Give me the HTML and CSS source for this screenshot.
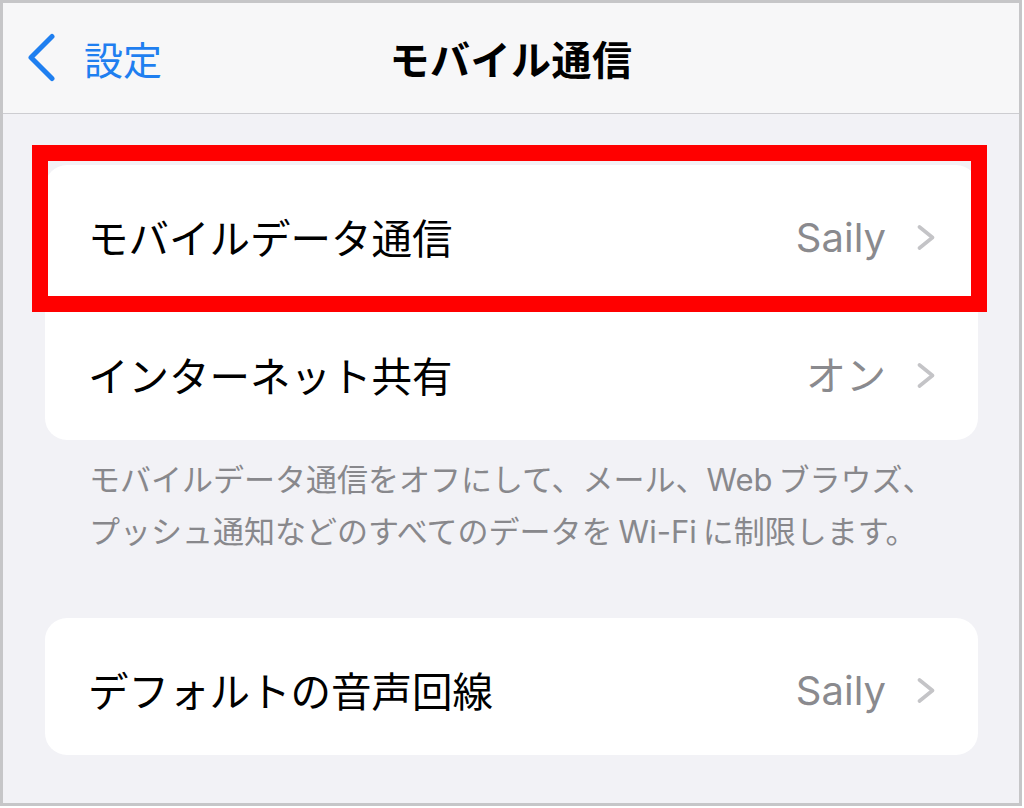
FILE: index.html
```html
<!DOCTYPE html>
<html lang="ja">
<head>
<meta charset="utf-8">
<title>モバイル通信</title>
<link rel="stylesheet" href="styles.css">
</head>
<body>
<div class="frame">
  <header class="nav">
    <div class="back">
      <svg class="back-icon" width="29" height="49" viewBox="0 0 29 49"><polyline points="25,3.5 4,24.5 25,45.5" fill="none" stroke="currentColor" stroke-width="5" stroke-linecap="round" stroke-linejoin="round"/></svg>
      <span class="back-text">設定</span>
    </div>
    <h1 class="title">モバイル通信</h1>
    <div class="spacer"></div>
  </header>
  <main class="content">
    <section class="group">
      <div class="row">
        <span class="label">モバイルデータ通信</span>
        <span class="value">Saily</span>
        <svg class="chev" width="18" height="25" viewBox="0 0 18 25"><polyline points="2.5,2 15.5,12.5 2.5,23" fill="none" stroke="currentColor" stroke-width="3.6" stroke-linecap="round" stroke-linejoin="round"/></svg>
      </div>
      <div class="divider"></div>
      <div class="row">
        <span class="label">インターネット共有</span>
        <span class="value">オン</span>
        <svg class="chev" width="18" height="25" viewBox="0 0 18 25"><polyline points="2.5,2 15.5,12.5 2.5,23" fill="none" stroke="currentColor" stroke-width="3.6" stroke-linecap="round" stroke-linejoin="round"/></svg>
      </div>
    </section>
    <p class="footer">モバイルデータ通信をオフにして、メール、Web<span class="gap"></span>ブラウズ、<br>プッシュ通知などのすべてのデータを<span class="gap"></span>Wi-Fi<span class="gap"></span>に制限します。</p>
    <section class="group group-2">
      <div class="row">
        <span class="label">デフォルトの音声回線</span>
        <span class="value">Saily</span>
        <svg class="chev" width="18" height="25" viewBox="0 0 18 25"><polyline points="2.5,2 15.5,12.5 2.5,23" fill="none" stroke="currentColor" stroke-width="3.6" stroke-linecap="round" stroke-linejoin="round"/></svg>
      </div>
    </section>
  </main>
  <div class="highlight"></div>
</div>
</body>
</html>
```
FILE: styles.css
```css
* { box-sizing: border-box; }
html, body { margin: 0; padding: 0; background: #ffffff; }
body {
  font-family: Inter, "Noto Sans CJK JP", sans-serif;
  color: #000;
}
.frame {
  position: relative;
  width: 1022px;
  height: 806px;
  border: 3px solid #c6c6c8;
  background: #f2f2f6;
  overflow: hidden;
}
.nav {
  height: 111px;
  background: #f7f7f8;
  border-bottom: 1px solid #cdcdd1;
  display: grid;
  grid-template-columns: 1fr auto 1fr;
  align-items: center;
}
.back {
  display: flex;
  align-items: center;
  padding-left: 24px;
  color: #1f7ff0;
}
.back-icon { display: block; margin-top: -2px; }
.back-text {
  margin-left: 28px;
  font-family: "Noto Sans CJK JP", sans-serif;
  font-size: 39px;
  line-height: 1;
}
.title {
  margin: 0;
  font-family: "Noto Sans CJK JP", sans-serif;
  font-size: 40px;
  font-weight: 700;
  line-height: 1;
  letter-spacing: 0.5px;
}
.content {
  padding: 51px 41px 0 42px;
}
.group {
  background: #ffffff;
  border-radius: 22px;
  overflow: hidden;
}
.row {
  height: 137px;
  display: flex;
  align-items: center;
  padding: 8px 43px 0 43px;
}
.label {
  flex: 1;
  font-family: "Noto Sans CJK JP", sans-serif;
  font-size: 40.5px;
  line-height: 1;
}
.value {
  font-size: 40px;
  line-height: 1;
  color: #8a8a8e;
  margin-right: 31px;
}
.chev { display: block; color: #c4c4c7; }
.divider {
  height: 1px;
  margin-left: 43px;
  background: #d8d8dc;
}
.footer {
  margin: 0;
  padding: 14px 0 0 44px;
  font-size: 31px;
  line-height: 52px;
  color: #88888c;
}
.gap {
  display: inline-block;
  width: 6px;
}
.group-2 { margin-top: 60px; }
.highlight {
  position: absolute;
  left: 29px;
  top: 142px;
  width: 955px;
  height: 167px;
  border: 16px solid #ff0000;
}
```
